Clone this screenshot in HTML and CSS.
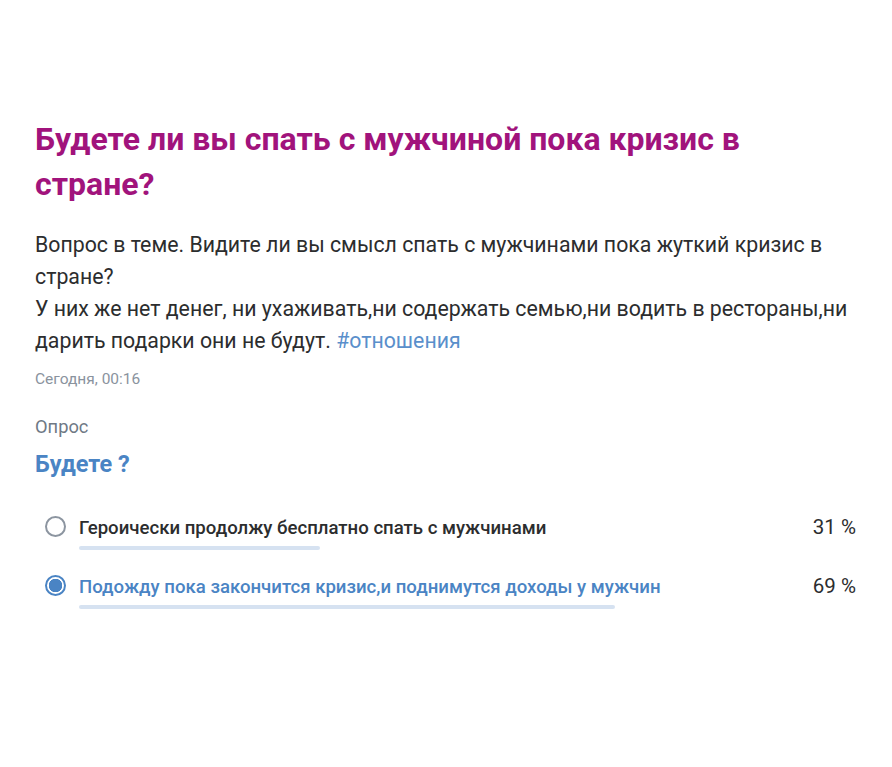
FILE: index.html
```html
<!DOCTYPE html>
<html lang="ru">
<head>
<meta charset="utf-8">
<link rel="stylesheet" href="styles.css">
</head>
<body>
<main class="post">
  <h1 class="title">Будете ли вы спать с мужчиной пока кризис в стране?</h1>
  <p class="text">Вопрос в теме. Видите ли вы смысл спать с мужчинами пока жуткий кризис в стране?<br>У них же нет денег, ни ухаживать,ни содержать семью,ни водить в рестораны,ни дарить подарки они не будут. <span class="tag">#отношения</span></p>
  <div class="date">Сегодня, 00:16</div>
  <section class="poll">
    <div class="poll-label">Опрос</div>
    <div class="poll-q">Будете ?</div>
    <div class="opt">
      <span class="radio"></span>
      <div class="opt-body">
        <div class="opt-row">
          <span class="opt-text">Героически продолжу бесплатно спать с мужчинами</span>
          <span class="pct">31 %</span>
        </div>
        <div class="bar" style="width:31%"></div>
      </div>
    </div>
    <div class="opt opt-sel">
      <span class="radio"></span>
      <div class="opt-body">
        <div class="opt-row">
          <span class="opt-text">Подожду пока закончится кризис,и поднимутся доходы у мужчин</span>
          <span class="pct">69 %</span>
        </div>
        <div class="bar" style="width:69%"></div>
      </div>
    </div>
  </section>
</main>
</body>
</html>
```

FILE: styles.css
```css
html, body {
  margin: 0;
  padding: 0;
  background: #fff;
}
body {
  font-family: Roboto, "Noto Sans", sans-serif;
  color: #2c2d2e;
}
.post {
  padding: 117px 20px 0 35px;
}
.title {
  margin: 0;
  max-width: 740px;
  font-size: 32px;
  line-height: 45px;
  font-weight: 700;
  color: #a1137c;
}
.text {
  margin: 22px 0 0;
  font-size: 21.3px;
  line-height: 32px;
  color: #2c2d2e;
}
.tag {
  color: #5a8fcb;
}
.date {
  margin-top: 12px;
  font-size: 15.5px;
  line-height: 20px;
  color: #8a939e;
}
.poll {
  margin-top: 26px;
  padding-right: 16px;
}
.poll-label {
  font-size: 18.3px;
  line-height: 24px;
  color: #6f7985;
}
.poll-q {
  margin-top: 10px;
  font-size: 23.5px;
  line-height: 30px;
  font-weight: 700;
  color: #4a84c4;
}
.opt {
  display: flex;
  align-items: flex-start;
  margin-top: 36px;
}
.opt + .opt {
  margin-top: 24px;
}
.radio {
  flex: none;
  width: 17px;
  height: 17px;
  border: 2.5px solid #8c95a0;
  border-radius: 50%;
  margin: 1px 13px 0 10px;
}
.opt-sel .radio {
  border-color: #4a84c4;
  background: radial-gradient(circle, #4a84c4 0 6.5px, #fff 7px);
}
.opt-body {
  flex: 1;
}
.opt-row {
  display: flex;
  justify-content: space-between;
  align-items: baseline;
}
.opt-text {
  font-size: 18.6px;
  line-height: 24px;
  font-weight: 500;
  color: #2c2d2e;
}
.opt-sel .opt-text {
  color: #4a84c4;
}
.bar {
  height: 4px;
  margin-top: 6px;
  border-radius: 2px;
  background: #d6e2f1;
}
.pct {
  font-size: 20.5px;
  line-height: 24px;
  color: #2c2d2e;
}
```
